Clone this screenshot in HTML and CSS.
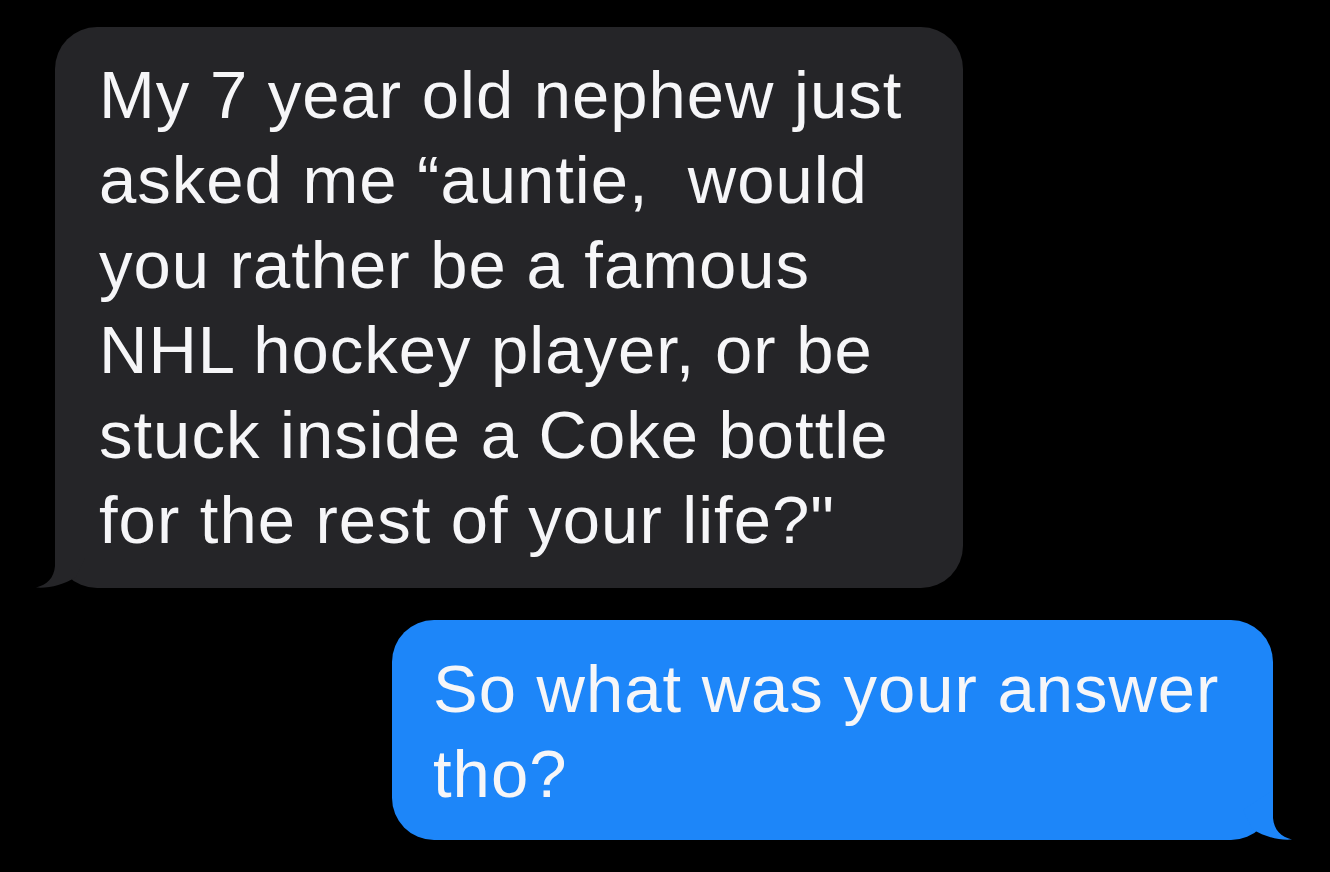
FILE: index.html
```html
<!DOCTYPE html>
<html lang="en">
  <head>
    <meta charset="UTF-8" />
    <meta name="viewport" content="width=device-width, initial-scale=1.0" />
    <title>Messages</title>
    <link rel="stylesheet" href="styles.css">
  </head>
  <body>
    <div class="thread">
      <div class="bubble received">
        <p>
          My 7 year old nephew just<br />
          asked me “auntie,&nbsp; would<br />
          you rather be a famous<br />
          NHL hockey player, or be<br />
          stuck inside a Coke bottle<br />
          for the rest of your life?"
        </p>
        <svg class="tail" viewBox="0 0 60 50" width="60" height="50">
          <path d="M20 0 L20 28 C19 40 12 47 1 49.5 C14 50.5 28 47 41 39 L50 20 Z" />
        </svg>
      </div>

      <div class="bubble sent">
        <p>
          So what was your answer<br />
          tho?
        </p>
        <svg class="tail" viewBox="0 0 60 50" width="60" height="50">
          <path d="M40 0 L40 28 C41 40 48 47 59 49.5 C46 50.5 32 47 19 39 L10 20 Z" />
        </svg>
      </div>
    </div>
  </body>
</html>
```

FILE: styles.css
```css
* {
  margin: 0;
  padding: 0;
  box-sizing: border-box;
}

body {
  background: #000;
  font-family: "Liberation Sans", Arial, sans-serif;
  color: #f6f6f8;
  overflow: hidden;
}

.thread {
  display: flex;
  flex-direction: column;
  gap: 32px;
  padding-top: 27px;
}

.bubble {
  position: relative;
  border-radius: 42px;
}

.bubble p {
  font-size: 67px;
  line-height: 85px;
  letter-spacing: 1px;
  white-space: nowrap;
}

.received {
  width: 908px;
  height: 561px;
  margin-left: 55px;
  padding: 25px 0 0 44px;
  background: #252528;
}

.received .tail {
  position: absolute;
  left: -20px;
  bottom: 0;
  fill: #252528;
}

.sent {
  width: 881px;
  height: 220px;
  margin-left: 392px;
  padding: 26px 0 0 41px;
  background: #1d86f9;
}

.sent .tail {
  position: absolute;
  right: -20px;
  bottom: 0;
  fill: #1d86f9;
}
```
